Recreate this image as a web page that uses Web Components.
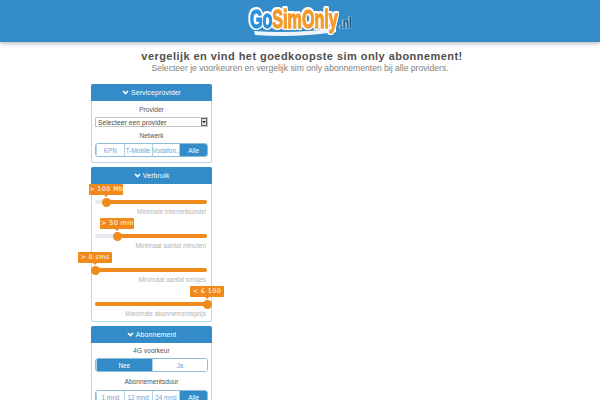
<!DOCTYPE html>
<html lang="nl">
<head>
<meta charset="utf-8">
<title>GoSimOnly.nl</title>
<style>
  html, body { margin: 0; padding: 0; height: 400px; overflow: hidden; background: #fff; }
  body { font-family: "Liberation Sans", sans-serif; }
</style>
</head>
<body>
<site-header></site-header>
<intro-text></intro-text>
<filter-column>
  <filter-panel title="Serviceprovider">
    <field-label>Provider</field-label>
    <select-box>Selecteer een provider</select-box>
    <field-label>Netwerk</field-label>
    <toggle-group options="KPN|T-Mobile|Vodafon...|Alle" active="3"></toggle-group>
  </filter-panel>
  <filter-panel title="Verbruik" compact>
    <range-slider tip="&gt; 100 Mb" pos="10" mode="right" label="Minimale internetbundel"></range-slider>
    <range-slider tip="&gt; 50 min" pos="20" mode="right" label="Minimaal aantal minuten"></range-slider>
    <range-slider tip="&gt; 0 sms" pos="0" mode="right" label="Minimaal aantal smsjes"></range-slider>
    <range-slider tip="&lt; € 100" pos="100" mode="left" label="Maximale abonnementsprijs"></range-slider>
  </filter-panel>
  <filter-panel title="Abonnement">
    <field-label style="height:15px">4G voorkeur</field-label>
    <toggle-group options="Nee|Ja" active="0"></toggle-group>
    <field-label style="height:18px">Abonnementsduur</field-label>
    <toggle-group options="1 mnd|12 mnd|24 mnd|Alle" active="3"></toggle-group>
  </filter-panel>
</filter-column>

<script>
  const BLUE = '#338bc8';
  const ORANGE = '#f08a1d';

  class SiteHeader extends HTMLElement {
    connectedCallback() {
      this.attachShadow({ mode: 'open' }).innerHTML = `
      <style>
        :host {
          display: flex;
          justify-content: center;
          height: 42px;
          background: ${BLUE};
          box-shadow: 0 1px 5px rgba(0, 0, 0, 0.35);
          position: relative;
        }
        svg { display: block; }
        text {
          font-family: "Liberation Sans", sans-serif;
          font-weight: 700;
          filter: drop-shadow(1.2px 0 0 #fff) drop-shadow(-1.2px 0 0 #fff) drop-shadow(0 1.2px 0 #fff) drop-shadow(0 -1.2px 0 #fff);
        }
        text.tld { filter: drop-shadow(0.5px 0 0 #cfe6f5) drop-shadow(-0.5px 0 0 #cfe6f5); }
      </style>
      <svg width="110" height="40" viewBox="0 0 110 40">
        <path d="M9 31 Q50 34 91 28 L91 32 Q50 38 10 35 Z" fill="#eef5fa"/>
        <text transform="translate(5 28) scale(0.645 1)" font-size="25"><tspan fill="#2b90dc" stroke="#2b90dc" stroke-width="1.3">Go</tspan><tspan fill="#f39a2c" stroke="#f39a2c" stroke-width="1.3">SimOnly</tspan></text>
        <text class="tld" transform="translate(95 28) scale(0.72 1)" font-size="14" fill="#17618f" stroke="#17618f" stroke-width="0.5">.nl</text>
      </svg>`;
    }
  }

  class IntroText extends HTMLElement {
    connectedCallback() {
      this.attachShadow({ mode: 'open' }).innerHTML = `
      <style>
        :host {
          display: block;
          box-sizing: border-box;
          text-align: center;
          padding-top: 7px;
          height: 42px;
          font-family: "Liberation Sans", sans-serif;
        }
        h1 {
          margin: 0;
          padding-left: 4px;
          font-size: 11px;
          line-height: 14px;
          letter-spacing: 0.45px;
          color: #505050;
        }
        p {
          margin: 0;
          font-size: 8.6px;
          line-height: 11px;
          color: #808080;
        }
      </style>
      <h1>vergelijk en vind het goedkoopste sim only abonnement!</h1>
      <p>Selecteer je voorkeuren en vergelijk sim only abonnementen bij alle providers.</p>`;
    }
  }

  class FilterColumn extends HTMLElement {
    connectedCallback() {
      this.attachShadow({ mode: 'open' }).innerHTML = `
      <style>
        :host {
          display: flex;
          flex-direction: column;
          gap: 4px;
          width: 121px;
          margin-left: 91px;
        }
      </style>
      <slot></slot>`;
    }
  }

  class FilterPanel extends HTMLElement {
    connectedCallback() {
      const compact = this.hasAttribute('compact');
      this.attachShadow({ mode: 'open' }).innerHTML = `
      <style>
        :host {
          display: block;
          box-sizing: border-box;
          border: 1px solid #b9d6ea;
          border-top: 0;
          border-radius: 2px;
          background: #fff;
          font-family: "Liberation Sans", sans-serif;
        }
        header {
          display: flex;
          align-items: center;
          justify-content: center;
          gap: 2px;
          height: 17px;
          margin: 0 -1px;
          background: ${BLUE};
          border-radius: 2px 2px 0 0;
          color: #fff;
          font-size: 7px;
          letter-spacing: 0.1px;
        }
        svg { display: block; }
        .body {
          padding: ${compact ? '0 4px 1px 3px' : '0 3px 5px'};
        }
      </style>
      <header>
        <svg width="7" height="5" viewBox="0 0 7 5"><path d="M1 1 L3.5 3.5 L6 1" fill="none" stroke="#fff" stroke-width="1.6"/></svg>
        <span>${this.getAttribute('title')}</span>
      </header>
      <div class="body"><slot></slot></div>`;
    }
  }

  class FieldLabel extends HTMLElement {
    connectedCallback() {
      this.attachShadow({ mode: 'open' }).innerHTML = `
      <style>
        :host {
          display: flex;
          align-items: center;
          justify-content: center;
          height: 16px;
          font-size: 6.6px;
          color: #555;
        }
      </style>
      <slot></slot>`;
    }
  }

  class SelectBox extends HTMLElement {
    connectedCallback() {
      this.attachShadow({ mode: 'open' }).innerHTML = `
      <style>
        :host {
          display: flex;
          align-items: center;
          justify-content: space-between;
          box-sizing: border-box;
          height: 10px;
          padding: 0 0 0 2px;
          border: 1px solid #c4c4c4;
          background: #fff;
          font-size: 6.6px;
          color: #444;
          letter-spacing: 0.1px;
        }
        i {
          display: flex;
          align-items: center;
          justify-content: center;
          width: 6px;
          height: 8px;
          background: #ddd;
          border: 1px solid #666;
          box-sizing: border-box;
        }
        i::after {
          content: "";
          border: 2px solid transparent;
          border-top-color: #222;
          border-bottom-width: 0;
        }
      </style>
      <span><slot></slot></span><i></i>`;
    }
  }

  class ToggleGroup extends HTMLElement {
    connectedCallback() {
      const options = this.getAttribute('options').split('|');
      const active = parseInt(this.getAttribute('active'));
      const items = options.map((o, i) =>
        `<button class="${i === active ? 'on' : ''}">${o}</button>`).join('');
      this.attachShadow({ mode: 'open' }).innerHTML = `
      <style>
        :host {
          display: flex;
          height: 14px;
          border: 1px solid #8fbcdc;
          border-radius: 3px;
          box-sizing: border-box;
          overflow: hidden;
        }
        button {
          flex: 1 1 0;
          min-width: 0;
          margin: 0;
          padding: 0;
          border: 0;
          border-left: 1px solid #b3d2e8;
          background: #fff;
          color: #6aa6d2;
          font: 6.4px "Liberation Sans", sans-serif;
          white-space: nowrap;
        }
        button:first-child { border-left: 0; }
        button.on { background: ${BLUE}; color: #fff; }
      </style>
      ${items}`;
    }
  }

  class RangeSlider extends HTMLElement {
    connectedCallback() {
      const pos = parseFloat(this.getAttribute('pos'));
      const mode = this.getAttribute('mode');
      const fill = mode === 'left'
        ? `left: 0; width: ${pos}%;`
        : `left: ${pos}%; right: 0;`;
      this.attachShadow({ mode: 'open' }).innerHTML = `
      <style>
        :host {
          display: block;
          box-sizing: border-box;
          height: 34px;
          padding-top: 16px;
          font-size: 6.5px;
          color: #b4b4b4;
          text-align: right;
        }
        .track {
          position: relative;
          height: 4px;
          background: #e6e9ee;
          border-radius: 2px;
        }
        .fill {
          position: absolute;
          top: 0;
          bottom: 0;
          ${fill}
          background: ${ORANGE};
          border-radius: 2px;
        }
        .thumb {
          position: absolute;
          left: ${pos}%;
          top: -2.5px;
          width: 9px;
          height: 9px;
          margin-left: -4.5px;
          border-radius: 50%;
          background: ${ORANGE};
        }
        .tip {
          position: absolute;
          left: ${pos}%;
          bottom: 9px;
          transform: translateX(-50%);
          width: 34px;
          height: 11px;
          background: ${ORANGE};
          border-radius: 1px;
          color: #fff;
          font: 6.4px/11px "DejaVu Sans", sans-serif;
          letter-spacing: 0.4px;
          text-align: center;
          white-space: nowrap;
        }
        .tip::after {
          content: "";
          position: absolute;
          left: 50%;
          top: 100%;
          margin-left: -2px;
          border: 2px solid transparent;
          border-top-color: ${ORANGE};
          border-bottom-width: 0;
        }
        .label { line-height: 9px; padding: 3px 1px 0 0; }
      </style>
      <div class="track">
        <div class="fill"></div>
        <div class="thumb"></div>
        <div class="tip">${this.getAttribute('tip').replace(/&/g, '&amp;').replace(/</g, '&lt;')}</div>
      </div>
      <div class="label">${this.getAttribute('label')}</div>`;
    }
  }

  customElements.define('site-header', SiteHeader);
  customElements.define('intro-text', IntroText);
  customElements.define('filter-column', FilterColumn);
  customElements.define('filter-panel', FilterPanel);
  customElements.define('field-label', FieldLabel);
  customElements.define('select-box', SelectBox);
  customElements.define('toggle-group', ToggleGroup);
  customElements.define('range-slider', RangeSlider);
</script>
</body>
</html>
